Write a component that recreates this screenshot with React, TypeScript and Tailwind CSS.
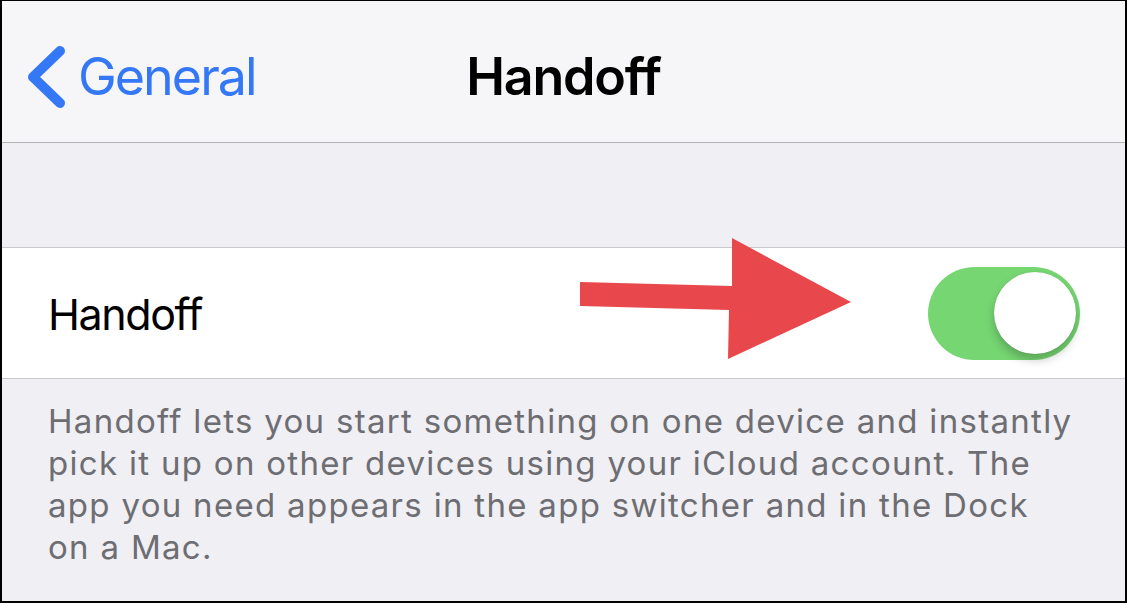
import React from "react";

export default function App() {
  return (
    <div
      className="relative w-[1127px] h-[603px] overflow-hidden bg-[#efeff4] border-black border-t border-l-2 border-r-2 border-b-2 flex flex-col"
      style={{ fontFamily: "Inter, 'Noto Sans', sans-serif" }}
    >
      {/* Nav bar */}
      <div className="h-[142px] shrink-0 bg-[#f6f6f8] border-b border-[#b2b2b4] grid grid-cols-[1fr_auto_1fr] items-center">
        <div className="flex items-center pl-[22px] pt-[10px]">
          <svg width="44" height="70" viewBox="0 0 44 70" className="shrink-0">
            <path
              d="M36 9 L9 35 L36 61"
              fill="none"
              stroke="#3478f6"
              strokeWidth="10"
              strokeLinecap="round"
              strokeLinejoin="round"
            />
          </svg>
          <span className="ml-[10px] text-[52px] leading-none text-[#3478f6] tracking-[-2px]">General</span>
        </div>
        <div className="pt-[10px] text-[52px] leading-none font-semibold text-black tracking-[-1.2px]">Handoff</div>
        <div />
      </div>

      {/* spacer */}
      <div className="h-[104px] shrink-0" />

      {/* Row */}
      <div className="h-[132px] shrink-0 bg-white border-y border-[#c8c7cc] flex items-center justify-between pl-[46px] pr-[45px]">
        <span className="text-[43px] leading-none text-black pt-[2px] tracking-[-1.4px]">Handoff</span>
        <div className="relative w-[152px] h-[93px] rounded-full bg-[#76d672]">
          <div className="absolute right-[4px] top-[5px] w-[82px] h-[82px] rounded-full bg-white shadow-[0_6px_10px_rgba(0,0,0,0.22),0_0_1px_rgba(0,0,0,0.2)]" />
        </div>
      </div>

      {/* Footer text */}
      <div className="pl-[46px] pr-[20px] pt-[21px] text-[33px] leading-[42px] text-[#6d6d72] tracking-[1.3px] whitespace-nowrap">
        Handoff lets you start something on one device and instantly
        <br />
        pick it up on other devices using your iCloud account. The
        <br />
        app you need appears in the app switcher and in the Dock
        <br />
        on a Mac.
      </div>

      {/* Red annotation arrow */}
      <svg
        className="absolute left-0 top-0 pointer-events-none"
        width="1127"
        height="603"
        viewBox="0 0 1127 603"
      >
        <polygon
          points="578,281 730,285 730,237 849,301 726,358 727,309 578,305"
          fill="#e8474c"
        />
      </svg>
    </div>
  );
}
